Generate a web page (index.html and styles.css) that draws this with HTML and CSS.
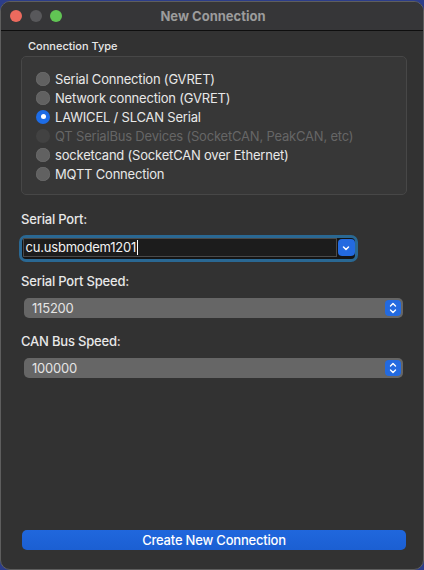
FILE: index.html
```html
<!DOCTYPE html>
<html>
<head>
<meta charset="utf-8">
<link rel="stylesheet" href="styles.css">
</head>
<body>
<div class="window">
  <div class="titlebar">
    <div class="lights">
      <span class="light red"></span>
      <span class="light gray"></span>
      <span class="light green"></span>
    </div>
    <div class="title">New Connection</div>
    <div></div>
  </div>
  <div class="content">
    <div class="group-title">Connection Type</div>
    <div class="group">
      <div class="radio-row"><span class="radio"></span><span>Serial Connection (GVRET)</span></div>
      <div class="radio-row"><span class="radio"></span><span>Network connection (GVRET)</span></div>
      <div class="radio-row"><span class="radio checked"></span><span>LAWICEL / SLCAN Serial</span></div>
      <div class="radio-row disabled"><span class="radio"></span><span>QT SerialBus Devices (SocketCAN, PeakCAN, etc)</span></div>
      <div class="radio-row"><span class="radio"></span><span>socketcand (SocketCAN over Ethernet)</span></div>
      <div class="radio-row"><span class="radio"></span><span>MQTT Connection</span></div>
    </div>

    <div class="field-label first">Serial Port:</div>
    <div class="combo-ring">
      <div class="combo">
        <div class="combo-input">cu.usbmodem1201<span class="caret"></span></div>
        <div class="combo-btn">
          <svg width="10" height="10" viewBox="0 0 10 10"><path d="M2.5 4 L5 6.5 L7.5 4" fill="none" stroke="#fff" stroke-width="1.5" stroke-linecap="round" stroke-linejoin="round"/></svg>
        </div>
      </div>
    </div>

    <div class="field-label second">Serial Port Speed:</div>
    <div class="popup">
      <span>115200</span>
      <div class="popup-btn">
        <svg width="10" height="14" viewBox="0 0 10 14"><path d="M2.5 5 L5 2.5 L7.5 5 M2.5 9 L5 11.5 L7.5 9" fill="none" stroke="#fff" stroke-width="1.4" stroke-linecap="round" stroke-linejoin="round"/></svg>
      </div>
    </div>

    <div class="field-label third">CAN Bus Speed:</div>
    <div class="popup">
      <span>100000</span>
      <div class="popup-btn">
        <svg width="10" height="14" viewBox="0 0 10 14"><path d="M2.5 5 L5 2.5 L7.5 5 M2.5 9 L5 11.5 L7.5 9" fill="none" stroke="#fff" stroke-width="1.4" stroke-linecap="round" stroke-linejoin="round"/></svg>
      </div>
    </div>

    <div class="spacer"></div>
    <button class="primary">Create New Connection</button>
  </div>
</div>
</body>
</html>
```

FILE: styles.css
```css
* { box-sizing: border-box; }
html, body { margin: 0; padding: 0; }
body {
  width: 424px;
  height: 570px;
  background: #2c3d8a;
  overflow: hidden;
  font-family: Inter, "Noto Sans", sans-serif;
  font-size: 13px;
  letter-spacing: -0.2px;
  color: #e6e6e6;
}
.window {
  margin-top: 1px;
  height: 569px;
  width: 424px;
  border: 1px solid #5e5e5e;
  border-radius: 10px;
  background: #323232;
  overflow: hidden;
  display: flex;
  flex-direction: column;
}
.titlebar {
  height: 29px;
  flex: none;
  background: #363638;
  border-bottom: 1px solid #0e0e0e;
  display: grid;
  grid-template-columns: 1fr auto 1fr;
  align-items: center;
}
.lights {
  display: flex;
  gap: 8px;
  padding-left: 9px;
  padding-bottom: 1px;
}
.light {
  width: 12px;
  height: 12px;
  border-radius: 50%;
}
.light.red { background: #ec6a5e; }
.light.gray { background: #58585b; }
.light.green { background: #61c454; }
.title {
  font-weight: 700;
  font-size: 13px;
  letter-spacing: 0;
  color: #9c9c9c;
  padding-left: 2px;
  padding-bottom: 1px;
}
.content {
  flex: 1;
  display: flex;
  flex-direction: column;
  padding: 0 16px 19px 20px;
}
.group-title {
  margin-top: 8px;
  margin-left: 7px;
  font-size: 11px;
  line-height: 14px;
  font-weight: 500;
  letter-spacing: 0;
  color: #e8e8e8;
}
.group {
  margin-top: 3px;
  border: 1px solid #474747;
  border-radius: 5px;
  background: #373737;
  padding: 12px 0 10px 14px;
}
.radio-row {
  height: 19.1px;
  display: flex;
  align-items: center;
  gap: 5px;
  white-space: nowrap;
  color: #e8e8e8;
}
.radio {
  width: 14px;
  height: 14px;
  border-radius: 50%;
  background: #616161;
  box-shadow: inset 0 0 0 0.5px #6e6e6e;
  flex: none;
  position: relative;
}
.radio.checked {
  background: #1d6ce6;
  box-shadow: none;
}
.radio.checked::after {
  content: "";
  position: absolute;
  left: 4.5px;
  top: 4.5px;
  width: 5px;
  height: 5px;
  border-radius: 50%;
  background: #fff;
}
.radio-row.disabled { color: #666; }
.radio-row.disabled .radio { background: #424242; box-shadow: none; }

.field-label {
  line-height: 16px;
  color: #e8e8e8;
  font-weight: 500;
}
.field-label.first { margin-top: 16px; }
.field-label.second { margin-top: 11px; }
.field-label.third { margin-top: 15px; }

.combo-ring {
  margin-top: 8px;
  margin-left: -2px;
  width: 339px;
  height: 27px;
  border: 3.5px solid #2a6893;
  border-radius: 7px;
  background: #141414;
  padding: 0.5px;
}
.combo {
  display: flex;
  align-items: center;
  height: 19px;
}
.combo-input {
  flex: 1;
  height: 19px;
  background: #1c1c1c;
  border: 1px solid #4a4a4a;
  padding-left: 2px;
  line-height: 17px;
  color: #f2f2f2;
  font-size: 13px;
  display: flex;
  align-items: center;
}
.caret {
  display: inline-block;
  width: 1px;
  height: 15px;
  background: #fff;
  margin-left: 1px;
}
.combo-btn {
  width: 17px;
  height: 17px;
  margin-left: 1px;
  border-radius: 4px;
  background: #236ae0;
  display: flex;
  align-items: center;
  justify-content: center;
  flex: none;
}
.popup {
  margin-top: 9px;
  margin-left: 3px;
  width: 379px;
  height: 20px;
  border-radius: 5px;
  background: #666666;
  display: flex;
  align-items: center;
  justify-content: space-between;
  padding: 0 2px 0 8px;
  color: #e4e4e4;
}
.popup-btn {
  width: 16px;
  height: 16px;
  border-radius: 4px;
  background: #236ae0;
  display: flex;
  align-items: center;
  justify-content: center;
}
.spacer { flex: 1; }
.primary {
  margin-left: 1px;
  width: 384px;
  height: 20px;
  border: none;
  border-radius: 5px;
  background: linear-gradient(#2067dd, #1b5fd2);
  color: #fff;
  font-family: Inter, "Noto Sans", sans-serif;
  font-size: 13px;
  letter-spacing: -0.2px;
  font-weight: 500;
  padding: 0;
}
```
